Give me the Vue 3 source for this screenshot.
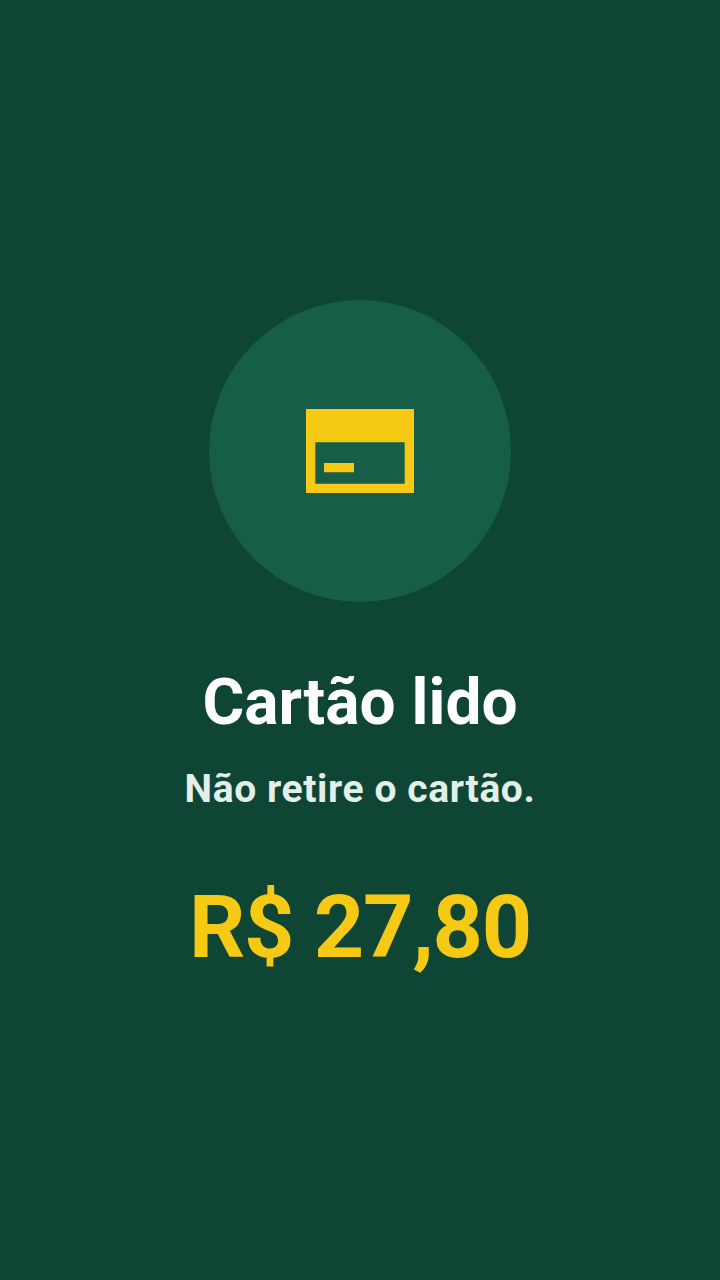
<script setup>
const title = "Cartão lido";
const message = "Não retire o cartão.";
const amount = "R$ 27,80";
</script>

<template>
  <main class="screen">
    <div class="icon-circle">
      <svg class="card-icon" width="108" height="84" viewBox="0 0 36 28">
        <path
          fill-rule="evenodd"
          d="M0 0h36v28H0zM3.1 11.1v13.8h29.8V11.1zM6 18h10v3.1H6z"
        />
      </svg>
    </div>
    <h1 class="title">{{ title }}</h1>
    <p class="message">{{ message }}</p>
    <p class="amount">{{ amount }}</p>
  </main>
</template>

<style scoped>
.screen {
  width: 720px;
  height: 1280px;
  box-sizing: border-box;
  padding-top: 300px;
  display: flex;
  flex-direction: column;
  align-items: center;
  background: #0f4535;
  font-family: Roboto, sans-serif;
  font-weight: 700;
  text-align: center;
}

.icon-circle {
  width: 302px;
  height: 302px;
  border-radius: 50%;
  background: #165e48;
  display: flex;
  align-items: center;
  justify-content: center;
}

.card-icon {
  fill: #f6c914;
}

.title {
  margin: 65px 0 0;
  font-size: 64px;
  line-height: 72px;
  color: #ffffff;
}

.message {
  margin: 26px 0 0;
  font-size: 39px;
  line-height: 48px;
  letter-spacing: 0.6px;
  color: #e3f0e9;
}

.amount {
  margin: 62px 0 0;
  font-size: 88px;
  line-height: 104px;
  letter-spacing: -1.3px;
  color: #f6c914;
}
</style>

<style>
body {
  background: #0f4535;
}
</style>
